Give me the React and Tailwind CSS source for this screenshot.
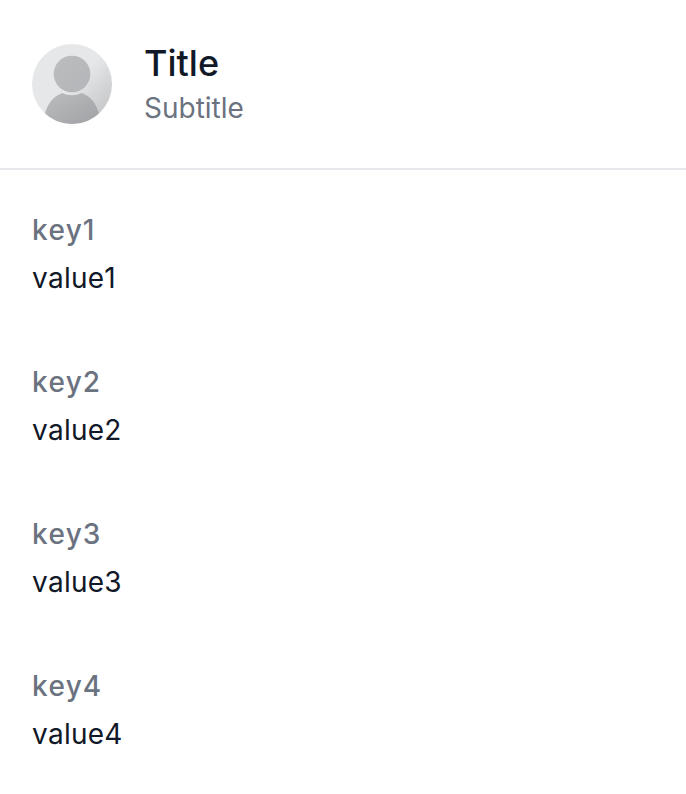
import React from "react";

const items = [
  { label: "key1", value: "value1" },
  { label: "key2", value: "value2" },
  { label: "key3", value: "value3" },
  { label: "key4", value: "value4" },
];

function Avatar() {
  return (
    <svg className="size-20 shrink-0" viewBox="0 0 80 80" aria-hidden="true">
      <defs>
        <linearGradient id="disc" x1="0" y1="0" x2="1" y2="1">
          <stop offset="0.5" stopColor="#e6e7e8" />
          <stop offset="1" stopColor="#bcbdbf" />
        </linearGradient>
        <linearGradient id="head" x1="0" y1="0" x2="1" y2="1">
          <stop offset="0" stopColor="#bcbdbf" />
          <stop offset="1" stopColor="#b4b5b8" />
        </linearGradient>
        <linearGradient id="person" x1="0" y1="0" x2="1" y2="1">
          <stop offset="0" stopColor="#bcbdbf" />
          <stop offset="1" stopColor="#a0a1a4" />
        </linearGradient>
        <clipPath id="round">
          <circle cx="40" cy="40" r="40" />
        </clipPath>
      </defs>
      <g clipPath="url(#round)">
        <rect width="80" height="80" fill="url(#disc)" />
        <circle cx="40" cy="30" r="18.3" fill="url(#head)" />
        <path d="M12 80C12 62 21 52 30.5 49C36 52 44 52 49.5 49C59 52 68 62 68 80Z" fill="url(#person)" />
      </g>
    </svg>
  );
}

export default function App() {
  return (
    <main className="h-[794px] w-[686px] overflow-hidden bg-white font-['Inter',sans-serif]">
      <header className="flex h-[170px] items-center gap-8 border-b-2 border-[#e5e7eb] px-8">
        <Avatar />
        <div>
          <h1 className="pb-0.5 text-4xl leading-[46px] font-medium text-[#111827]">Title</h1>
          <p className="text-[28px] leading-10 text-[#6b7280]">Subtitle</p>
        </div>
      </header>
      <dl className="flex flex-col gap-16 px-8 pt-10 text-[28px] leading-10 [font-kerning:none]">
        {items.map((item) => (
          <div key={item.label} className="flex flex-col gap-2">
            <dt className="font-medium tracking-[0.85px] text-[#6b7280]">{item.label}</dt>
            <dd className="tracking-[0.25px] text-[#111827]">{item.value}</dd>
          </div>
        ))}
      </dl>
    </main>
  );
}
